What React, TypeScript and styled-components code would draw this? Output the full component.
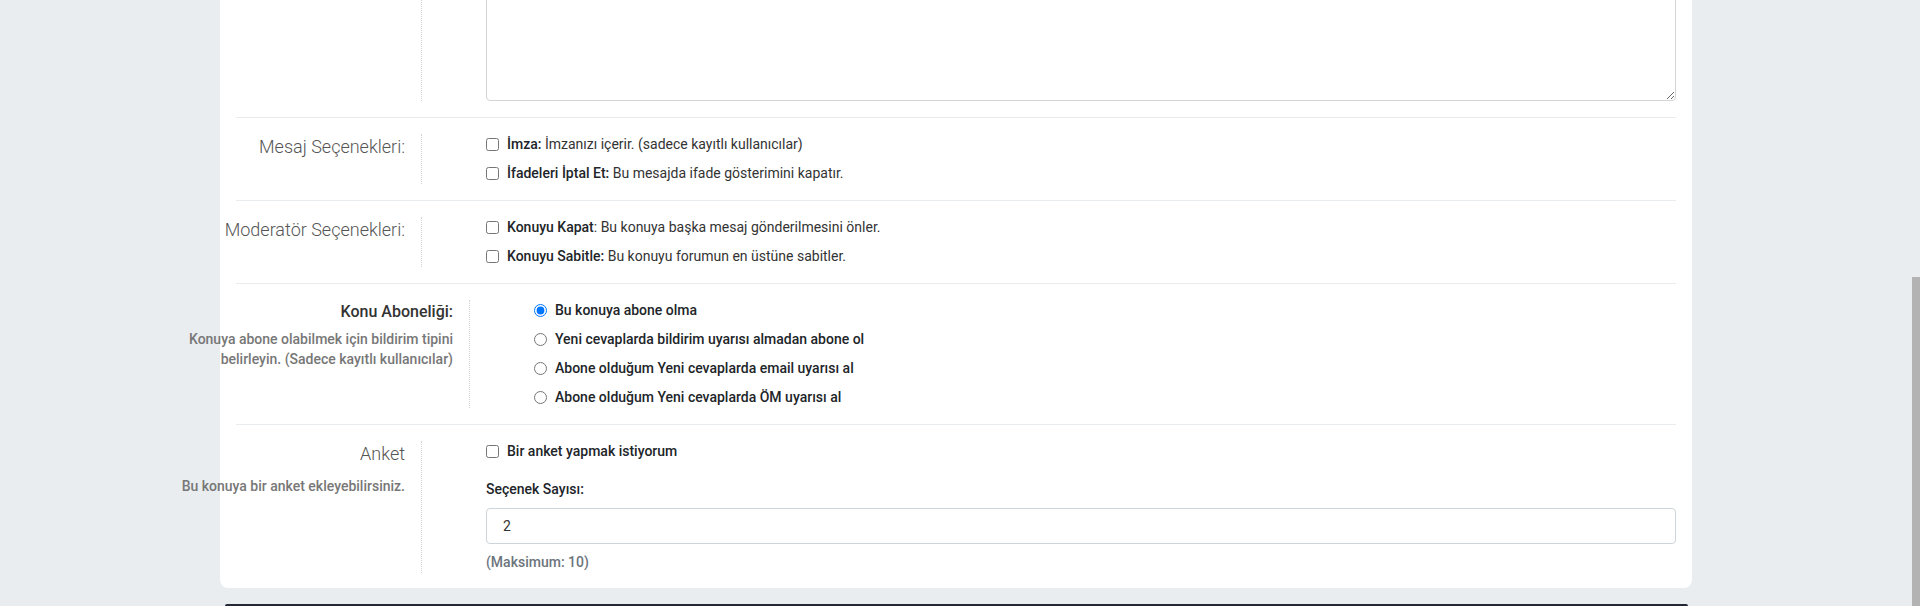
import React from 'react';
import styled, { createGlobalStyle } from 'styled-components';

const GlobalStyle = createGlobalStyle`
  html, body {
    margin: 0;
    padding: 0;
    background: #e9edf0;
    font-family: Roboto, "Liberation Sans", Arial, sans-serif;
    color: #212529;
  }
  * {
    box-sizing: border-box;
  }
`;

const Screen = styled.div`
  display: flex;
  height: 100vh;
  overflow: hidden;
  background: #e9edf0;
`;

const Viewport = styled.div`
  flex: 1;
  display: flex;
  flex-direction: column;
  justify-content: flex-end;
  align-items: center;
  overflow: hidden;
`;

const ScrollTrack = styled.div`
  width: 8px;
  flex-shrink: 0;
  display: flex;
  flex-direction: column;
`;

const ScrollThumb = styled.div`
  margin-top: 277px;
  flex: 1;
  background: #b3b3b3;
`;

const Card = styled.div`
  width: 1472px;
  flex-shrink: 0;
  background: #fff;
  border-radius: 8px;
  padding: 0 16px;
`;

const FooterBar = styled.div`
  width: 1463px;
  height: 2px;
  flex-shrink: 0;
  margin-top: 16px;
  background: #222834;
  border-radius: 3px 3px 0 0;
`;

const Row = styled.div`
  display: flex;
  padding: 16px 0;
  border-bottom: 1px solid #e9ecef;

  &:last-child {
    border-bottom: none;
    padding-bottom: 15px;
  }
`;

const LabelCol = styled.div<{ $width: number }>`
  width: ${(p) => p.$width}px;
  flex-shrink: 0;
  padding-right: 16px;
  border-right: 1px dotted #cfd3d7;
  display: flex;
  flex-direction: column;
  align-items: flex-end;
  text-align: right;
`;

const ContentCol = styled.div`
  flex: 1;
  min-width: 0;
  padding-left: 64px;
  display: flex;
  flex-direction: column;
`;

const LightLabel = styled.div`
  font-size: 18px;
  font-weight: 300;
  line-height: 26px;
  color: #555;
  white-space: nowrap;
`;

const TitleLabel = styled.div`
  align-self: stretch;
  text-align: right;
  font-size: 16px;
  font-weight: 500;
  line-height: 24px;
  color: #333;
  white-space: nowrap;
`;

const HelpText = styled.div<{ $top: number }>`
  margin-top: ${(p) => p.$top}px;
  font-size: 14px;
  font-weight: 500;
  line-height: 20px;
  color: #777;
  white-space: nowrap;
`;

const MessageBox = styled.textarea`
  display: block;
  width: 100%;
  height: 180px;
  border: 1px solid #d2d4d6;
  border-radius: 4px;
  font-family: inherit;
  font-size: 14px;
  padding: 8px 16px;
  outline: none;
`;

const OptionList = styled.div`
  display: flex;
  flex-direction: column;
  gap: 8px;
`;

const Option = styled.label`
  display: flex;
  align-items: center;
  gap: 8px;
  height: 21px;
  font-size: 14px;
  line-height: 21px;
  color: #333;
  white-space: nowrap;

  input {
    margin: 0;
    width: 13px;
    height: 13px;
    flex-shrink: 0;
  }

  strong {
    font-weight: 500;
    color: #212529;
  }
`;

const MediumOption = styled(Option)`
  font-weight: 500;
  color: #212529;
`;

const FieldLabel = styled.div`
  margin-top: 17px;
  font-size: 14px;
  font-weight: 500;
  line-height: 21px;
  color: #212529;
`;

const NumberInput = styled.input`
  margin-top: 8px;
  height: 36px;
  width: 100%;
  border: 1px solid #ced4da;
  border-radius: 4px;
  padding: 0 16px;
  font-family: inherit;
  font-size: 14px;
  color: #333;
  outline: none;
`;

const Hint = styled.div`
  margin-top: 8px;
  font-size: 14px;
  font-weight: 500;
  line-height: 21px;
  color: #6c757d;
`;

const subscriptions = [
  'Bu konuya abone olma',
  'Yeni cevaplarda bildirim uyarısı almadan abone ol',
  'Abone olduğum Yeni cevaplarda email uyarısı al',
  'Abone olduğum Yeni cevaplarda ÖM uyarısı al',
];

export default function App() {
  return (
    <>
      <GlobalStyle />
      <Screen>
        <Viewport>
          <Card>
            <Row>
              <LabelCol $width={186} />
              <ContentCol>
                <MessageBox />
              </ContentCol>
            </Row>

            <Row>
              <LabelCol $width={186}>
                <LightLabel>Mesaj Seçenekleri:</LightLabel>
              </LabelCol>
              <ContentCol>
                <OptionList>
                  <Option>
                    <input type="checkbox" />
                    <span>
                      <strong>İmza:</strong> İmzanızı içerir. (sadece kayıtlı kullanıcılar)
                    </span>
                  </Option>
                  <Option>
                    <input type="checkbox" />
                    <span>
                      <strong>İfadeleri İptal Et:</strong> Bu mesajda ifade gösterimini kapatır.
                    </span>
                  </Option>
                </OptionList>
              </ContentCol>
            </Row>

            <Row>
              <LabelCol $width={186}>
                <LightLabel>Moderatör Seçenekleri:</LightLabel>
              </LabelCol>
              <ContentCol>
                <OptionList>
                  <Option>
                    <input type="checkbox" />
                    <span>
                      <strong>Konuyu Kapat</strong>: Bu konuya başka mesaj gönderilmesini önler.
                    </span>
                  </Option>
                  <Option>
                    <input type="checkbox" />
                    <span>
                      <strong>Konuyu Sabitle:</strong> Bu konuyu forumun en üstüne sabitler.
                    </span>
                  </Option>
                </OptionList>
              </ContentCol>
            </Row>

            <Row>
              <LabelCol $width={234}>
                <TitleLabel>Konu Aboneliği:</TitleLabel>
                <HelpText $top={5}>
                  Konuya abone olabilmek için bildirim tipini
                  <br />
                  belirleyin. (Sadece kayıtlı kullanıcılar)
                </HelpText>
              </LabelCol>
              <ContentCol>
                <OptionList>
                  {subscriptions.map((text, i) => (
                    <MediumOption key={text}>
                      <input type="radio" name="subscription" defaultChecked={i === 0} />
                      <span>{text}</span>
                    </MediumOption>
                  ))}
                </OptionList>
              </ContentCol>
            </Row>

            <Row>
              <LabelCol $width={186}>
                <LightLabel>Anket</LightLabel>
                <HelpText $top={9}>Bu konuya bir anket ekleyebilirsiniz.</HelpText>
              </LabelCol>
              <ContentCol>
                <MediumOption>
                  <input type="checkbox" />
                  <span>Bir anket yapmak istiyorum</span>
                </MediumOption>
                <FieldLabel>Seçenek Sayısı:</FieldLabel>
                <NumberInput type="text" defaultValue="2" />
                <Hint>(Maksimum: 10)</Hint>
              </ContentCol>
            </Row>
          </Card>
          <FooterBar />
        </Viewport>
        <ScrollTrack>
          <ScrollThumb />
        </ScrollTrack>
      </Screen>
    </>
  );
}
